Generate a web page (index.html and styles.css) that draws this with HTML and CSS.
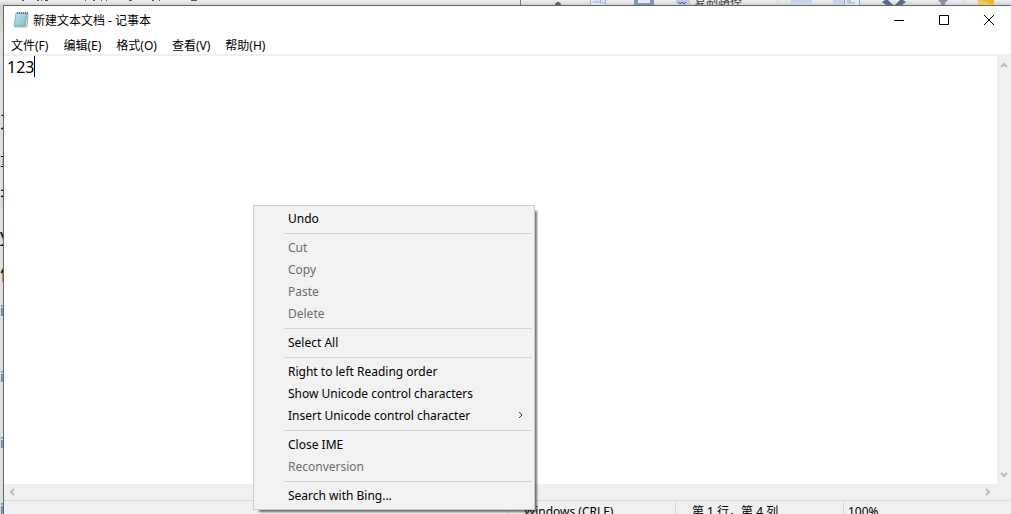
FILE: index.html
```html
<!DOCTYPE html>
<html lang="zh-CN">
<head>
  <meta charset="utf-8">
  <title>新建文本文档 - 记事本</title>
  <meta name="viewport" content="width=device-width, initial-scale=1.0">
  <link rel="stylesheet" href="styles.css">
</head>
<body>
  <!-- windows lying behind notepad -->
  <div class="behind" aria-hidden="true">
    <div class="doc-left">
      <svg class="doc-marks" width="210" height="5" viewBox="0 0 210 5">
        <path d="M22 0h2M37 0h2M41 0h1M45 0h3M85 0h1M93 0h2M101 0h1M106 0h1M129 0h3M152 0h2M159 0h1M191 0h6" stroke="#555" stroke-width="2"/>
      </svg>
      <div class="doc-text">
        <span>刀</span>
        <span>量</span>
        <span>否</span>
        <span>y</span>
        <span>们</span>
        <span class="link">in</span>
        <span class="link">in</span>
        <span class="link">in</span>
        <span class="link">in</span>
      </div>
    </div>
    <div class="ribbon">
      <svg width="492" height="5" viewBox="0 0 492 5">
        <path d="M34 5v-1l2-2h2l2 2v1z" fill="#5c6270"/>
        <path d="M69.500-.5h15v6h-15z" fill="#dce5f2" stroke="#9fb4d2"/>
        <path d="M72 2h7M79.500 0v3h5" stroke="#9fb4d2" fill="none"/>
        <path d="M113 0h20v5h-20z" fill="#8296b8"/>
        <path d="M117 0h12v3h-12z" fill="#e6ecf5"/>
        <path d="M155 0h14v5h-14z" fill="#bccbe2"/>
        <path d="M157 2l2 2 2-2 2 2 2-2" stroke="#45587c" fill="none"/>
        <path d="M256.500 0v5M443.500 0v5" stroke="#cfd2d8"/>
        <path d="M270 0h21v5h-21z" fill="#c8d3e6"/>
        <path d="M312 0h15v5h-15z" fill="#c8d3e6"/>
        <path d="M323.500-.5h15v6h-15z" fill="#e3eaf5" stroke="#91a5c6"/>
        <path d="M326 1h4M326 3h8" stroke="#91a5c6"/>
        <path d="M361 2l3-2h3l5 5h-7zM385 2l-3-2h-3l-5 5h7z" fill="#566a8c"/>
        <path d="M417 0h10l-3 3v2h-4v-2z" fill="#8790b0"/>
        <path d="M457 0h16v5h-16z" fill="#f0ca55"/>
        <path d="M461 0h12v5z" fill="#e5b52f"/>
      </svg>
      <span class="ribbon-text">复制路径</span>
    </div>
  </div>

  <main class="window">
    <header class="titlebar">
      <svg class="app-icon" width="16" height="18" viewBox="0 0 16 18">
        <defs>
          <linearGradient id="cover" x1="0" y1="0" x2="1" y2="1">
            <stop offset="0" stop-color="#c9edf4"/>
            <stop offset="1" stop-color="#5aa6b9"/>
          </linearGradient>
        </defs>
        <path d="M4 3h11l-1 13H2z" fill="#f6f3ea" stroke="#b7a98b"/>
        <path d="M3 2h11l-2 13H1z" fill="url(#cover)" stroke="#7fb9c6"/>
        <path d="M4 5h9M3 7h9M3 9h9M3 11h9M2 13h9" stroke="#a9dae4"/>
        <path d="M4.500 1v2M6.500 1v2M8.500 1v2M10.500 1v2M12.500 1v2M14.500 1v2" stroke="#5d7379"/>
      </svg>
      <h1>新建文本文档 - 记事本</h1>
      <div class="caption-buttons">
        <button type="button" aria-label="最小化">
          <svg width="10" height="10" viewBox="0 0 10 10"><path d="M0 5.500h10"/></svg>
        </button>
        <button type="button" aria-label="最大化">
          <svg width="10" height="10" viewBox="0 0 10 10"><path d="M.5.5h9v9h-9z"/></svg>
        </button>
        <button type="button" aria-label="关闭">
          <svg width="10" height="10" viewBox="0 0 10 10"><path d="M0 0l10 10M10 0L0 10"/></svg>
        </button>
      </div>
    </header>

    <nav class="menubar">
      <button type="button">文件(F)</button>
      <button type="button">编辑(E)</button>
      <button type="button">格式(O)</button>
      <button type="button">查看(V)</button>
      <button type="button">帮助(H)</button>
    </nav>

    <div class="editor">
      <div class="text-area" role="textbox" aria-multiline="true" contenteditable="true" spellcheck="false">123<span class="caret"></span></div>
      <div class="scroll-v">
        <svg width="8" height="6" viewBox="0 0 8 6"><path d="M1 5l3-3 3 3"/></svg>
        <svg width="8" height="6" viewBox="0 0 8 6"><path d="M1 1l3 3 3-3"/></svg>
      </div>
      <div class="scroll-h">
        <svg width="6" height="8" viewBox="0 0 6 8"><path d="M5 1L2 4l3 3"/></svg>
        <svg width="6" height="8" viewBox="0 0 6 8"><path d="M1 1l3 3-3 3"/></svg>
      </div>
    </div>

    <footer class="statusbar">
      <span class="encoding">Windows (CRLF)</span>
      <span class="position">第 1 行，第 4 列</span>
      <span class="zoom">100%</span>
    </footer>
  </main>

  <div class="context-menu" role="menu">
    <button type="button" role="menuitem">Undo</button>
    <hr>
    <button type="button" role="menuitem" disabled>Cut</button>
    <button type="button" role="menuitem" disabled>Copy</button>
    <button type="button" role="menuitem" disabled>Paste</button>
    <button type="button" role="menuitem" disabled>Delete</button>
    <hr>
    <button type="button" role="menuitem">Select All</button>
    <hr>
    <button type="button" role="menuitem">Right to left Reading order</button>
    <button type="button" role="menuitem">Show Unicode control characters</button>
    <button type="button" role="menuitem">Insert Unicode control character
      <svg width="6" height="8" viewBox="0 0 6 8"><path d="M1 1l3 3-3 3"/></svg>
    </button>
    <hr>
    <button type="button" role="menuitem">Close IME</button>
    <button type="button" role="menuitem" disabled>Reconversion</button>
    <hr>
    <button type="button" role="menuitem">Search with Bing...</button>
  </div>
</body>
</html>
```
FILE: styles.css
```css
* {
  box-sizing: border-box;
}

body {
  margin: 0;
  height: 100vh;
  padding: 5px 0 0 3px;
  overflow: hidden;
  position: relative;
  font-family: "Noto Sans", "Noto Sans CJK SC", sans-serif;
  font-size: 12px;
  color: #000;
  background-color: #dcdcdc;
}

button {
  border: none;
  background: none;
  padding: 0;
  font: inherit;
  color: inherit;
}

svg {
  display: block;
  flex: none;
}

/* windows behind */
.behind {
  position: absolute;
  inset: 0;
  display: flex;
  overflow: hidden;
}

.doc-left {
  position: relative;
  flex: none;
  width: 520px;
  background: linear-gradient(#f0f0f0, #cfcfcf 6px, #dededc 40px);
}

.doc-marks {
  position: absolute;
  left: 0;
  top: 0;
}

.doc-text {
  display: flex;
  flex-direction: column;
  padding-top: 103px;
}

.doc-text span {
  height: 38px;
  font-size: 18px;
  line-height: 36px;
}

.doc-text .link {
  height: 66px;
  font-size: 14px;
  color: #2f6f9f;
}

.ribbon {
  position: relative;
  flex: 1;
  border-left: 1px solid #777;
  background: linear-gradient(#eeeff1, #d2d3d6 5px);
}

.ribbon-text {
  position: absolute;
  left: 173px;
  top: -6px;
  line-height: 16px;
  color: #444;
}

/* notepad window */
.window {
  position: relative;
  display: flex;
  flex-direction: column;
  height: 100vh;
  margin-right: 1px;
  border-top: 1px solid #666;
  border-left: 1px solid #666;
  background-color: #fff;
}

.titlebar {
  display: flex;
  align-items: center;
  height: 28px;
  padding-left: 9px;
  gap: 4px;
}

.titlebar h1 {
  flex: 1;
  margin: 0;
  font-size: 12px;
  font-weight: normal;
}

.caption-buttons {
  display: flex;
}

.caption-buttons button {
  display: flex;
  align-items: center;
  justify-content: center;
  width: 45px;
  height: 28px;
}

.caption-buttons path {
  fill: none;
  stroke: #000;
}

.menubar {
  display: flex;
  height: 22px;
  padding: 1px 0 0 7px;
  gap: 15px;
  border-bottom: 2px solid #f0f0f0;
}

.editor {
  flex: 1;
  display: grid;
  grid-template-columns: 1fr 14px;
  grid-template-rows: 1fr 16px;
  background-color: #f0f0f0;
}

.text-area {
  display: flex;
  align-items: flex-start;
  padding: 0 3px;
  background-color: #fff;
  font-size: 16px;
  line-height: 22px;
  outline: none;
}

.caret {
  width: 1px;
  height: 21px;
  background-color: #000;
}

.scroll-v,
.scroll-h {
  display: flex;
  align-items: center;
  justify-content: space-between;
}

.scroll-v {
  flex-direction: column;
  padding: 6px 0;
}

.scroll-h {
  padding: 0 6px 0 5px;
}

.scroll-v path,
.scroll-h path {
  fill: none;
  stroke: #bbb;
  stroke-width: 2;
}

.statusbar {
  display: flex;
  justify-content: flex-end;
  height: 19px;
  flex: none;
  border-top: 1px solid #d7d7d7;
  background-color: #f0f0f0;
  line-height: 22px;
  white-space: nowrap;
}

.statusbar span {
  border-left: 1px solid #d7d7d7;
  padding-left: 16px;
  width: 168px;
}

.statusbar .zoom {
  padding-left: 4px;
}

/* right click menu */
.context-menu {
  position: absolute;
  left: 253px;
  top: 205px;
  width: 282px;
  padding: 2px;
  border: 1px solid #ccc;
  background-color: #f2f2f2;
  box-shadow: 4px 4px 2px -2px rgba(0, 0, 0, 0.55);
}

.context-menu button {
  display: flex;
  align-items: center;
  justify-content: space-between;
  width: 100%;
  height: 22px;
  padding: 0 8px 2px 32px;
  text-align: left;
}

.context-menu button:disabled {
  color: #6d6d6d;
}

.context-menu hr {
  height: 1px;
  margin: 3px 0 3px 28px;
  border: none;
  background-color: #d5d5d5;
}

.context-menu path {
  fill: none;
  stroke: #333;
}
```
